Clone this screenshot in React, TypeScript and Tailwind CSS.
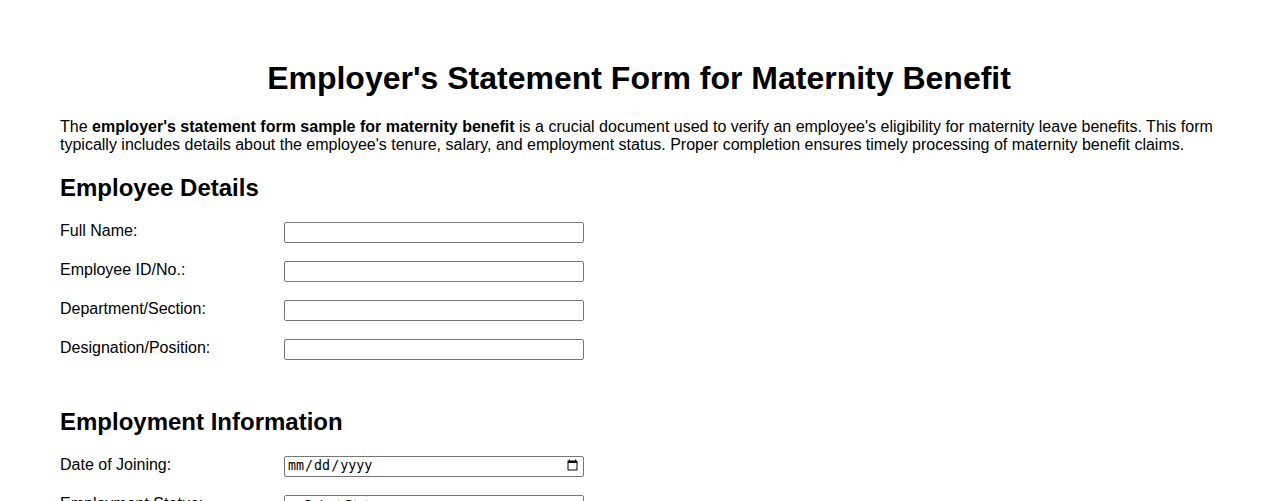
import React from "react";

const inputCls =
  "w-[300px] h-[21px] border border-[#767676] rounded-[2px] px-[2px] pt-0 pb-[2px] text-[13.33px] bg-white";

function Row({ label, children }: { label: string; children: React.ReactNode }) {
  return (
    <div className="flex items-baseline">
      <label className="w-[224px] shrink-0 text-[16px] leading-[18px]">{label}</label>
      {children}
    </div>
  );
}

export default function App() {
  return (
    <div className="bg-white text-black min-h-screen px-[60px] pt-[33px] pb-10 font-['Liberation_Sans',Arial,sans-serif]">
      <h1 className="text-[32px] font-bold text-center leading-normal mt-[21.44px] mb-[15.5px]">
        Employer's Statement Form for Maternity Benefit
      </h1>
      <p className="text-[16px] leading-[18px] mb-[16px]">
        The <strong>employer's statement form sample for maternity benefit</strong> is a crucial
        document used to verify an employee's eligibility for maternity leave benefits. This form
        typically includes details about the employee's tenure, salary, and employment status.
        Proper completion ensures timely processing of maternity benefit claims.
      </p>

      <h2 className="text-[24px] font-bold leading-normal mt-[16px] mb-[16px]">Employee Details</h2>
      <div className="flex flex-col gap-[18px]">
        <Row label="Full Name:">
          <input type="text" className={inputCls} />
        </Row>
        <Row label="Employee ID/No.:">
          <input type="text" className={inputCls} />
        </Row>
        <Row label="Department/Section:">
          <input type="text" className={inputCls} />
        </Row>
        <Row label="Designation/Position:">
          <input type="text" className={inputCls} />
        </Row>
      </div>

      <h2 className="text-[24px] font-bold leading-normal mt-[44px] mb-[16px]">Employment Information</h2>
      <div className="flex flex-col gap-[18px]">
        <Row label="Date of Joining:">
          <input type="date" className={inputCls + " font-['DejaVu_Sans_Mono',monospace] text-[11.5px]"} />
        </Row>
        <Row label="Employment Status:">
          <select className={inputCls} defaultValue="">
            <option value="">-- Select Status --</option>
            <option>Permanent</option>
            <option>Contractual</option>
          </select>
        </Row>
        <Row label="Monthly Salary:">
          <input type="text" className={inputCls} />
        </Row>
      </div>
    </div>
  );
}
